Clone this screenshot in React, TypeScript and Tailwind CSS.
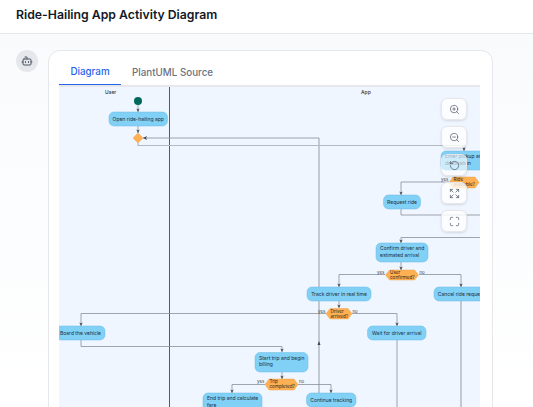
import { Bot, Expand, Maximize, RotateCcw, ZoomIn, ZoomOut } from "lucide-react";

type Box = { x: number; y: number; w: number; h: number; lines: string[] };
type Hex = { x: number; y: number; w: number; h: number; lines: string[] };

const boxes: Box[] = [
  { x: 109, y: 112, w: 58.5, h: 14, lines: ["Open ride-hailing app"] },
  { x: 441, y: 151, w: 70, h: 19, lines: ["Enter pickup and", "destination"] },
  { x: 383.5, y: 195, w: 37, h: 14, lines: ["Request ride"] },
  { x: 376, y: 243, w: 52, h: 19, lines: ["Confirm driver and", "estimated arrival"] },
  { x: 307, y: 287, w: 64, h: 14, lines: ["Track driver in real time"] },
  { x: 434, y: 287, w: 54, h: 14, lines: ["Cancel ride request"] },
  { x: 367.5, y: 326, w: 58.5, h: 14, lines: ["Wait for driver arrival"] },
  { x: 56, y: 326, w: 49, h: 14, lines: ["Board the vehicle"] },
  { x: 255, y: 352.5, w: 53, h: 19.5, lines: ["Start trip and begin", "billing"] },
  { x: 203, y: 393, w: 59, h: 20, lines: ["End trip and calculate", "fare"] },
  { x: 306.5, y: 393, w: 49.5, h: 14, lines: ["Continue tracking"] },
];

const hexes: Hex[] = [
  { x: 449, y: 177, w: 30, h: 11, lines: ["Ride", "available?"] },
  { x: 385.5, y: 270, w: 33, h: 10, lines: ["User", "confirmed?"] },
  { x: 326, y: 308.5, w: 26, h: 10.5, lines: ["Driver", "arrived?"] },
  { x: 265, y: 379, w: 33, h: 11, lines: ["Trip", "completed?"] },
];

const edges = [
  "M138 105V112",
  "M138 126V133",
  "M319 138H143",
  "M397 340V407",
  "M401 262V270",
  "M385 274.5H339V287",
  "M419 274.5H461V287",
  "M339 301V308",
  "M326 313.5H81V326",
  "M352 313.5H397V326",
  "M81 340V346.5H282V352",
  "M282 372V379",
  "M265 384.5H232V393",
  "M298 384.5H331V393",
  "M449 182H401V195",
  "M401 209V215H480",
  "M480 237.5H401V243",
  "M464 145V151",
];

const arrows = [
  [138, 112], [138, 133], [401, 270], [339, 287], [461, 287], [339, 308], [81, 326], [397, 326],
  [282, 352], [282, 379], [232, 393], [331, 393], [401, 195], [401, 243], [464, 151],
];

const labels = [
  { x: 441, y: 181, t: "yes" }, { x: 377, y: 274, t: "yes" }, { x: 419.5, y: 274, t: "no" },
  { x: 318, y: 313, t: "yes" }, { x: 352.5, y: 313, t: "no" }, { x: 257, y: 383, t: "yes" },
  { x: 299, y: 383, t: "no" },
];

function Diagram() {
  return (
    <svg className="block" width={421} height={320} viewBox="59 87 421 320" style={{ fontFamily: "Inter, sans-serif" }}>
      <text x={105} y={94} fontSize={5} fontWeight={500} fill="#333">User</text>
      <text x={361} y={94} fontSize={5} fontWeight={500} fill="#333">App</text>
      <path d="M169.5 87V407" stroke="#555b66" strokeWidth={1} fill="none" />
      <path d="M138 143V145.5H464" stroke="#b4bac4" strokeWidth={1.2} fill="none" />
      <path d="M319 138V407" stroke="#b4bac4" strokeWidth={1.5} fill="none" />
      <path d="M461 301V407" stroke="#a4aab4" strokeWidth={1.2} fill="none" />
      {edges.map((d) => (
        <path key={d} d={d} stroke="#8a909a" strokeWidth={0.8} fill="none" />
      ))}
      <circle cx={138} cy={101} r={4} fill="#00695c" />
      <polygon points="138,133 143,138 138,143 133,138" fill="#ffb052" stroke="#e59a3c" strokeWidth={0.4} />
      <polygon points="143,138 147,136 146,138 147,140" fill="#444" />
      <polygon points="317.5,345 319,341 320.5,345" fill="#444" />
      {arrows.map(([x, y]) => (
        <polygon key={`${x}-${y}`} points={`${x - 1.7},${y - 3.4} ${x},${y - 2.4} ${x + 1.7},${y - 3.4} ${x},${y}`} fill="#444" />
      ))}
      {boxes.map((b) => (
        <g key={b.lines[0]}>
          <rect x={b.x} y={b.y} width={b.w} height={b.h} rx={5} fill="#81d0f6" stroke="#6dbbe2" strokeWidth={0.5} />
          {b.lines.map((l, i) => (
            <text
              key={l}
              x={b.lines.length > 1 ? b.x + 4 : b.x + b.w / 2}
              y={b.lines.length > 1 ? b.y + 7.3 + i * 6.2 : b.y + b.h / 2 + 2}
              textAnchor={b.lines.length > 1 ? "start" : "middle"}
              fontSize={5}
              fill="#1f2f3a"
            >
              {l}
            </text>
          ))}
        </g>
      ))}
      {hexes.map((h) => (
        <g key={h.lines[0]}>
          <polygon
            points={`${h.x},${h.y + h.h / 2} ${h.x + 4},${h.y} ${h.x + h.w - 4},${h.y} ${h.x + h.w},${h.y + h.h / 2} ${h.x + h.w - 4},${h.y + h.h} ${h.x + 4},${h.y + h.h}`}
            fill="#ffb052"
            stroke="#e59a3c"
            strokeWidth={0.4}
          />
          {h.lines.map((l, i) => (
            <text key={l} x={h.x + 4.5} y={h.y + 4.4 + i * 5} fontSize={4.6} fill="#2c2418">
              {l}
            </text>
          ))}
        </g>
      ))}
      {labels.map((l) => (
        <text key={`${l.x}-${l.y}`} x={l.x} y={l.y} fontSize={4.4} fill="#444">
          {l.t}
        </text>
      ))}
    </svg>
  );
}

const controls = [
  { icon: ZoomIn, cls: "bg-white/80" },
  { icon: ZoomOut, cls: "bg-white/80" },
  { icon: RotateCcw, cls: "bg-white/60" },
  { icon: Expand, cls: "bg-white/80" },
  { icon: Maximize, cls: "bg-white/80" },
];

export default function App() {
  return (
    <div className="h-[407px] w-[533px] overflow-hidden bg-gradient-to-b from-[#f8fafc] to-white font-['Inter',sans-serif]">
      <header className="flex h-[34px] items-center border-b border-[#e5e7eb] bg-white pb-[2px] pl-4">
        <h1 className="text-[12.25px] font-semibold text-[#111827]">Ride-Hailing App Activity Diagram</h1>
      </header>
      <main className="flex gap-[10px] pl-4 pt-4">
        <div className="flex h-[22px] w-[22px] shrink-0 items-center justify-center rounded-full bg-[#e5e7eb] text-[#4b5563]">
          <Bot size={12} />
        </div>
        <div className="h-[400px] w-[445px] rounded-xl border border-[#e5e7eb] bg-white px-[10px] pt-2">
          <div className="flex h-[26px] text-[9.8px] font-medium">
            <div className="flex w-[62px] items-center justify-center border-b-[1.5px] border-[#2563eb] pt-[2px] text-[#2563eb]">Diagram</div>
            <div className="ml-[11px] flex items-center pt-[2px] text-[#6b7280]">PlantUML Source</div>
          </div>
          <div className="h-[2px] w-[421px] bg-[#e5e7eb]" />
          <div className="relative h-[320px] w-[421px] overflow-hidden bg-[#eff6ff]">
            <Diagram />
            <div className="absolute right-[13px] top-[11px] flex flex-col gap-[6px]">
              {controls.map(({ icon: Icon, cls }, i) => (
                <div
                  key={i}
                  className={`flex h-[22px] w-[26px] items-center justify-center rounded-md border border-[#e5e7eb] shadow-sm ${cls}`}
                >
                  <Icon size={11} strokeWidth={1.5} className="text-[#4b5563]" />
                </div>
              ))}
            </div>
          </div>
        </div>
      </main>
    </div>
  );
}
